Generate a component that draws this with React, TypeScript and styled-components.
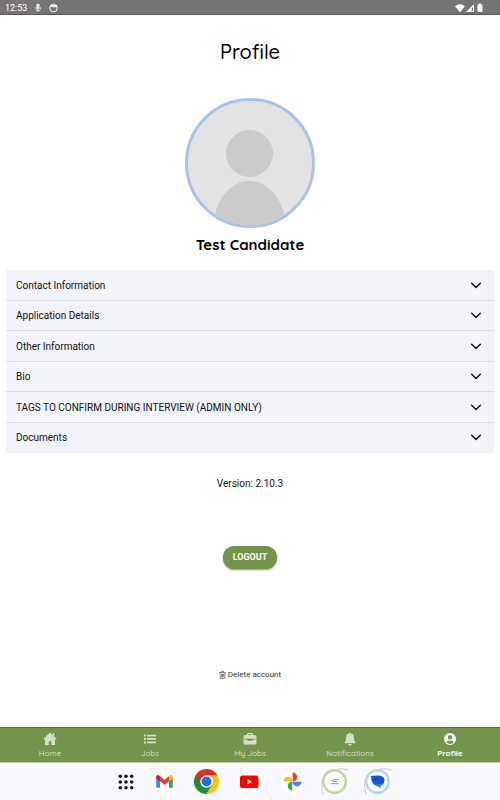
import React, { useState } from "react";
import styled, { createGlobalStyle } from "styled-components";

const GlobalStyle = createGlobalStyle`
  *, *::before, *::after { box-sizing: border-box; }
  body {
    margin: 0;
    background: #fff;
    color: #111;
    font-family: Roboto, "Liberation Sans", sans-serif;
  }
  button { font: inherit; color: inherit; border: 0; background: none; padding: 0; cursor: pointer; }
  svg { display: block; flex: none; }
`;

const rounded = `Quicksand, Lato, "Open Sans", sans-serif`;

const Screen = styled.div`
  display: flex;
  flex-direction: column;
  min-height: 100vh;
`;

const StatusBar = styled.header`
  display: flex;
  align-items: center;
  justify-content: space-between;
  height: 15px;
  padding: 1px 16px 0 5px;
  background: #757575;
  border-bottom: 1px solid #555;
  color: #fff;
  font-size: 9px;
  line-height: 14px;
`;

const StatusGroup = styled.div<{ $gap: number }>`
  display: flex;
  align-items: center;
  gap: ${(p) => p.$gap}px;
`;

const Main = styled.main`
  flex: 1;
  display: flex;
  flex-direction: column;
  align-items: center;
  padding: 24px 6px 0;
`;

const Title = styled.h1`
  margin: 0 0 34px;
  font: 500 20px/25px ${rounded};
  color: #000;
`;

const Avatar = styled.div`
  width: 130px;
  height: 130px;
  border: 3px solid #abc3e9;
  border-radius: 50%;
  overflow: hidden;
  background: #e3e3e3;
`;

const Name = styled.h2`
  margin: 7px 0 15px;
  font: 700 15px/20px ${rounded};
  color: #000;
`;

const Accordion = styled.div`
  align-self: stretch;
  display: grid;
  grid-auto-rows: 1fr;
  min-height: 183px;
  background: #f3f4f9;
`;

const Section = styled.button`
  display: flex;
  align-items: center;
  justify-content: space-between;
  padding: 2px 12px 0 10px;
  font-size: 10px;
  line-height: 16px;
  text-align: left;
  border-bottom: 1px solid #dcdee3;
  &:last-child { border-bottom-color: transparent; }
`;

const Version = styled.p`
  margin: 23px 0 54px;
  font-size: 10px;
  line-height: 16px;
`;

const Logout = styled.button`
  height: 23px;
  padding: 0 10px;
  border-radius: 12px;
  background: #749449;
  box-shadow: 0 1px 2px rgba(0, 0, 0, 0.45);
  color: #fff;
  font-size: 9px;
  font-weight: 700;
  line-height: 23px;
`;

const DeleteLink = styled.button`
  display: flex;
  align-items: center;
  gap: 2px;
  margin-top: 99px;
  color: #333;
  font-size: 8px;
  line-height: 14px;
`;

const Nav = styled.nav`
  display: grid;
  grid-template-columns: repeat(5, 1fr);
  height: 36px;
  background: #749449;
  border-top: 1px solid #55782a;
  border-bottom: 1px solid #c5d0b5;
`;

const Tab = styled.button<{ $active: boolean }>`
  display: flex;
  flex-direction: column;
  align-items: center;
  padding-top: 4px;
  gap: 1px;
  color: ${(p) => (p.$active ? "#fff" : "#d3dec5")};
  font: ${(p) => (p.$active ? 700 : 500)} 8px/12px ${rounded};
`;

const Dock = styled.footer`
  display: flex;
  justify-content: center;
  height: 37px;
  padding-left: 8px;
  background: #f9f8ff;
`;

const DockRow = styled.div`
  display: flex;
  align-items: center;
  justify-content: space-between;
  width: 272px;
`;

const AppButton = styled.button`
  display: block;
`;

const Chevron = () => (
  <svg width="12" height="12" viewBox="0 0 12 12" fill="none" stroke="#111" strokeWidth="1.4" strokeLinecap="round" strokeLinejoin="round">
    <path d="M1.700 3.300 6 7.600l4.300-4.300" />
  </svg>
);

const sections = [
  "Contact Information",
  "Application Details",
  "Other Information",
  "Bio",
  "TAGS TO CONFIRM DURING INTERVIEW (ADMIN ONLY)",
  "Documents",
];

const tabs = [
  {
    label: "Home",
    icon: <path d="M7 .6.3 7l.8.8.9-.8v6h3.700V9.200h2.600V13H12V7l.9.800.8-.800-2.300-2.200V1.300H9.700v1.900Z" />,
  },
  {
    label: "Jobs",
    icon: <path d="M1 2.600h2v2H1Zm3 .1h9v1.700H4ZM1 6h2v2H1Zm3 .1h9v1.700H4ZM1 9.400h2v2H1Zm3 .1h9v1.700H4Z" />,
  },
  {
    label: "My Jobs",
    icon: <path fillRule="evenodd" d="M4 3V2.200Q4 1 5.200 1h3.600Q10 1 10 2.200V3h1.500Q13.500 3 13.500 5v1.700h-13V5Q.5 3 2.500 3Zm1.200 0h3.600v-.8H5.200ZM.5 7.600h3.700v1.200h5.600V7.600h3.700V11q0 1.500-1.500 1.500H2Q.5 12.500.5 11Z" />,
  },
  {
    label: "Notifications",
    icon: <path d="M7 .5q.9 0 1 1c2.200.5 3 2.200 3 4.500 0 2.500.5 3.300 1.400 4.200.4.5.2 1-.4 1H2c-.6 0-.8-.5-.4-1C2.500 9.300 3 8.500 3 6c0-2.300.8-4 3-4.500q.1-1 1-1ZM5.200 11.900h3.600Q8.500 13.400 7 13.400t-1.800-1.500Z" />,
  },
  {
    label: "Profile",
    icon: (
      <path fillRule="evenodd" d="M7 1a6 6 0 1 1 0 12A6 6 0 0 1 7 1Zm0 2.200a2.200 2.200 0 1 0 0 4.400 2.200 2.200 0 0 0 0-4.400Zm0 5.300c-1.900 0-3.200.8-3.800 1.700a5 5 0 0 0 7.600 0C10.200 9.300 8.900 8.500 7 8.500Z" />
    ),
  },
];

const White = () => <circle cx="12.5" cy="12.5" r="12.3" fill="#fff" stroke="#f1f0f5" strokeWidth=".5" />;

const apps = [
  {
    name: "Gmail",
    art: (
      <>
        <White />
        <path fill="#4285f4" d="M4.200 8v9.500q0 1.200 1.200 1.200H8v-7.900Z" />
        <path fill="#34a853" d="M17 10.800v7.900h2.600q1.200 0 1.200-1.200V8Z" />
        <path fill="#fbbc04" d="M17 7.300v5l3.800-2.900V7.800c0-1.800-1.900-2.200-3-1.200Z" />
        <path fill="#ea4335" d="M8 12.300v-5l4.500 3.400L17 7.300v5l-4.500 3.500Z" />
        <path fill="#c5221f" d="M4.200 7.800v1.600L8 12.300v-5l-.8-.7c-1.100-1-3-.6-3 1.200Z" />
      </>
    ),
  },
  {
    name: "Chrome",
    art: (
      <>
        <circle cx="12.5" cy="12.5" r="12.5" fill="#fbc116" />
        <path fill="#1e8e3e" d="M1.670 6.250A12.500 12.500 0 0 0 12.500 25l5.400-9.370L12.500 12.500Z" />
        <path fill="#d93025" d="M1.670 6.250a12.500 12.500 0 0 1 21.660 0H12.500l-5.410 9.370Z" />
        <circle cx="12.5" cy="12.5" r="6.25" fill="#fff" />
        <circle cx="12.5" cy="12.5" r="5" fill="#1a73e8" />
      </>
    ),
  },
  {
    name: "YouTube",
    art: (
      <>
        <White />
        <rect x="3" y="6.5" width="18.5" height="12.5" rx="2.6" fill="#f00" />
        <path fill="#fff" d="m10.600 10.100 4.500 2.600-4.500 2.600Z" />
      </>
    ),
  },
  {
    name: "Photos",
    art: (
      <>
        <White />
        <path fill="#ea4335" d="M12.700 3.500a4.500 4.500 0 0 1 0 9Z" />
        <path fill="#4285f4" d="M21.500 12.700a4.500 4.500 0 0 1-9 0Z" />
        <path fill="#34a853" d="M12.300 21.500a4.500 4.500 0 0 1 0-9Z" />
        <path fill="#fbbc04" d="M3.500 12.300a4.500 4.500 0 0 1 9 0Z" />
      </>
    ),
  },
  {
    name: "Jobs app",
    art: (
      <>
        <path d="M1.500 25.800Q-1.500 19 .4 10M15 .2Q21-1.200 26.300 1.200" fill="none" stroke="#c4c4cc" strokeWidth=".9" />
        <circle cx="12.5" cy="12.5" r="11.3" fill="#fff" stroke="#b8dc91" strokeWidth="2.4" />
        <path fill="none" stroke="#83ac52" strokeWidth=".9" d="M9 10.600l1.700 1.900h4.300l1.500-1.900h-4.500l-1.800 1.500" />
        <path stroke="#72756f" strokeWidth=".7" d="M8.500 14.700h8.500" />
      </>
    ),
  },
  {
    name: "Messages",
    art: (
      <>
        <path d="M1.500 25.800Q-1.500 19 .4 10M15 .2Q21-1.200 26.300 1.200" fill="none" stroke="#c4c4cc" strokeWidth=".9" />
        <circle cx="12.5" cy="12.5" r="11.3" fill="#fff" stroke="#b2d1fb" strokeWidth="2.4" />
        <ellipse cx="13.3" cy="12.8" rx="6" ry="4.3" fill="#2b7bee" />
        <path fill="#2b7bee" d="M10.300 15.500h5.200v3.700Z" />
        <ellipse cx="13" cy="10.700" rx="6.600" ry="4.200" fill="#0b57d0" />
        <path fill="#0b57d0" d="M6 6.700q-.7 0-.3.600Q7 9 6.600 11.500L12 6.700Z" />
      </>
    ),
  },
];

export default function App() {
  const [active, setActive] = useState("Profile");
  return (
    <Screen>
      <GlobalStyle />
      <StatusBar>
        <StatusGroup $gap={7}>
          <span>12:53</span>
          <svg width="8" height="10" viewBox="0 0 8 10" fill="none" stroke="#fff" strokeWidth="1">
            <circle cx="4" cy="2.5" r="1.3" fill="#fff" fillOpacity=".6" />
            <path d="M1 5h6M2 6.500 4 8.500l2-2M4 4v4" />
          </svg>
          <svg width="9" height="10" viewBox="0 0 9 10" fill="none" stroke="#fff" strokeWidth="1">
            <circle cx="4.5" cy="5" r="3.8" />
            <path fill="#fff" stroke="none" d="M1.500 2h6v2.300L6 3.800l-1.500.6L3 3.800l-1.500.5Z" />
          </svg>
        </StatusGroup>
        <StatusGroup $gap={1}>
          <svg width="10" height="10" viewBox="0 0 10 10" fill="#fff">
            <path d="M0 3.200Q5-.8 10 3.200L5 9.200Z" />
          </svg>
          <svg width="8" height="10" viewBox="0 0 8 10" fill="#fff">
            <path fillRule="evenodd" d="M8 1v8H0ZM7 4.500H5.700V8H7Z" />
          </svg>
          <svg width="9" height="10" viewBox="0 0 9 10" fill="#fff">
            <path d="M4 .5h2v1h1.500V9h-5V1.500H4Z" />
          </svg>
        </StatusGroup>
      </StatusBar>
      <Main>
        <Title>Profile</Title>
        <Avatar>
          <svg width="124" height="124" viewBox="0 0 124 124" fill="#cbcbcb" role="img" aria-label="Profile picture">
            <circle cx="61.5" cy="52.5" r="23.5" />
            <ellipse cx="61.5" cy="126" rx="36" ry="46" />
          </svg>
        </Avatar>
        <Name>Test Candidate</Name>
        <Accordion>
          {sections.map((s) => (
            <Section key={s} type="button" aria-expanded={false}>
              {s}
              <Chevron />
            </Section>
          ))}
        </Accordion>
        <Version>Version: 2.10.3</Version>
        <Logout type="button">LOGOUT</Logout>
        <DeleteLink type="button">
          <svg width="7" height="8" viewBox="0 0 7 8" fill="none" stroke="#555" strokeWidth=".7">
            <path d="M.3 1.500h6.400M2.300 1.500V.5h2.400v1M1 1.500l.4 6h4.200l.4-6M2.600 2.800v3.500M3.500 2.800v3.500M4.400 2.800v3.500" />
          </svg>
          Delete account
        </DeleteLink>
      </Main>
      <Nav>
        {tabs.map((t) => (
          <Tab key={t.label} type="button" $active={t.label === active} onClick={() => setActive(t.label)}>
            <svg width="14" height="14" viewBox="0 0 14 14" fill="currentColor">
              {t.icon}
            </svg>
            {t.label}
          </Tab>
        ))}
      </Nav>
      <Dock>
        <DockRow>
          <AppButton type="button" aria-label="All apps">
            <svg width="16" height="16" viewBox="0 0 16 16" fill="#1c1b22">
              {[2.3, 8, 13.7].map((y) => [2.3, 8, 13.7].map((x) => <circle key={`${x}-${y}`} cx={x} cy={y} r="1.8" />))}
            </svg>
          </AppButton>
          {apps.map((a) => (
            <AppButton key={a.name} type="button" aria-label={a.name}>
              <svg width="25" height="25" viewBox="0 0 25 25" overflow="visible">
                {a.art}
              </svg>
            </AppButton>
          ))}
        </DockRow>
      </Dock>
    </Screen>
  );
}
